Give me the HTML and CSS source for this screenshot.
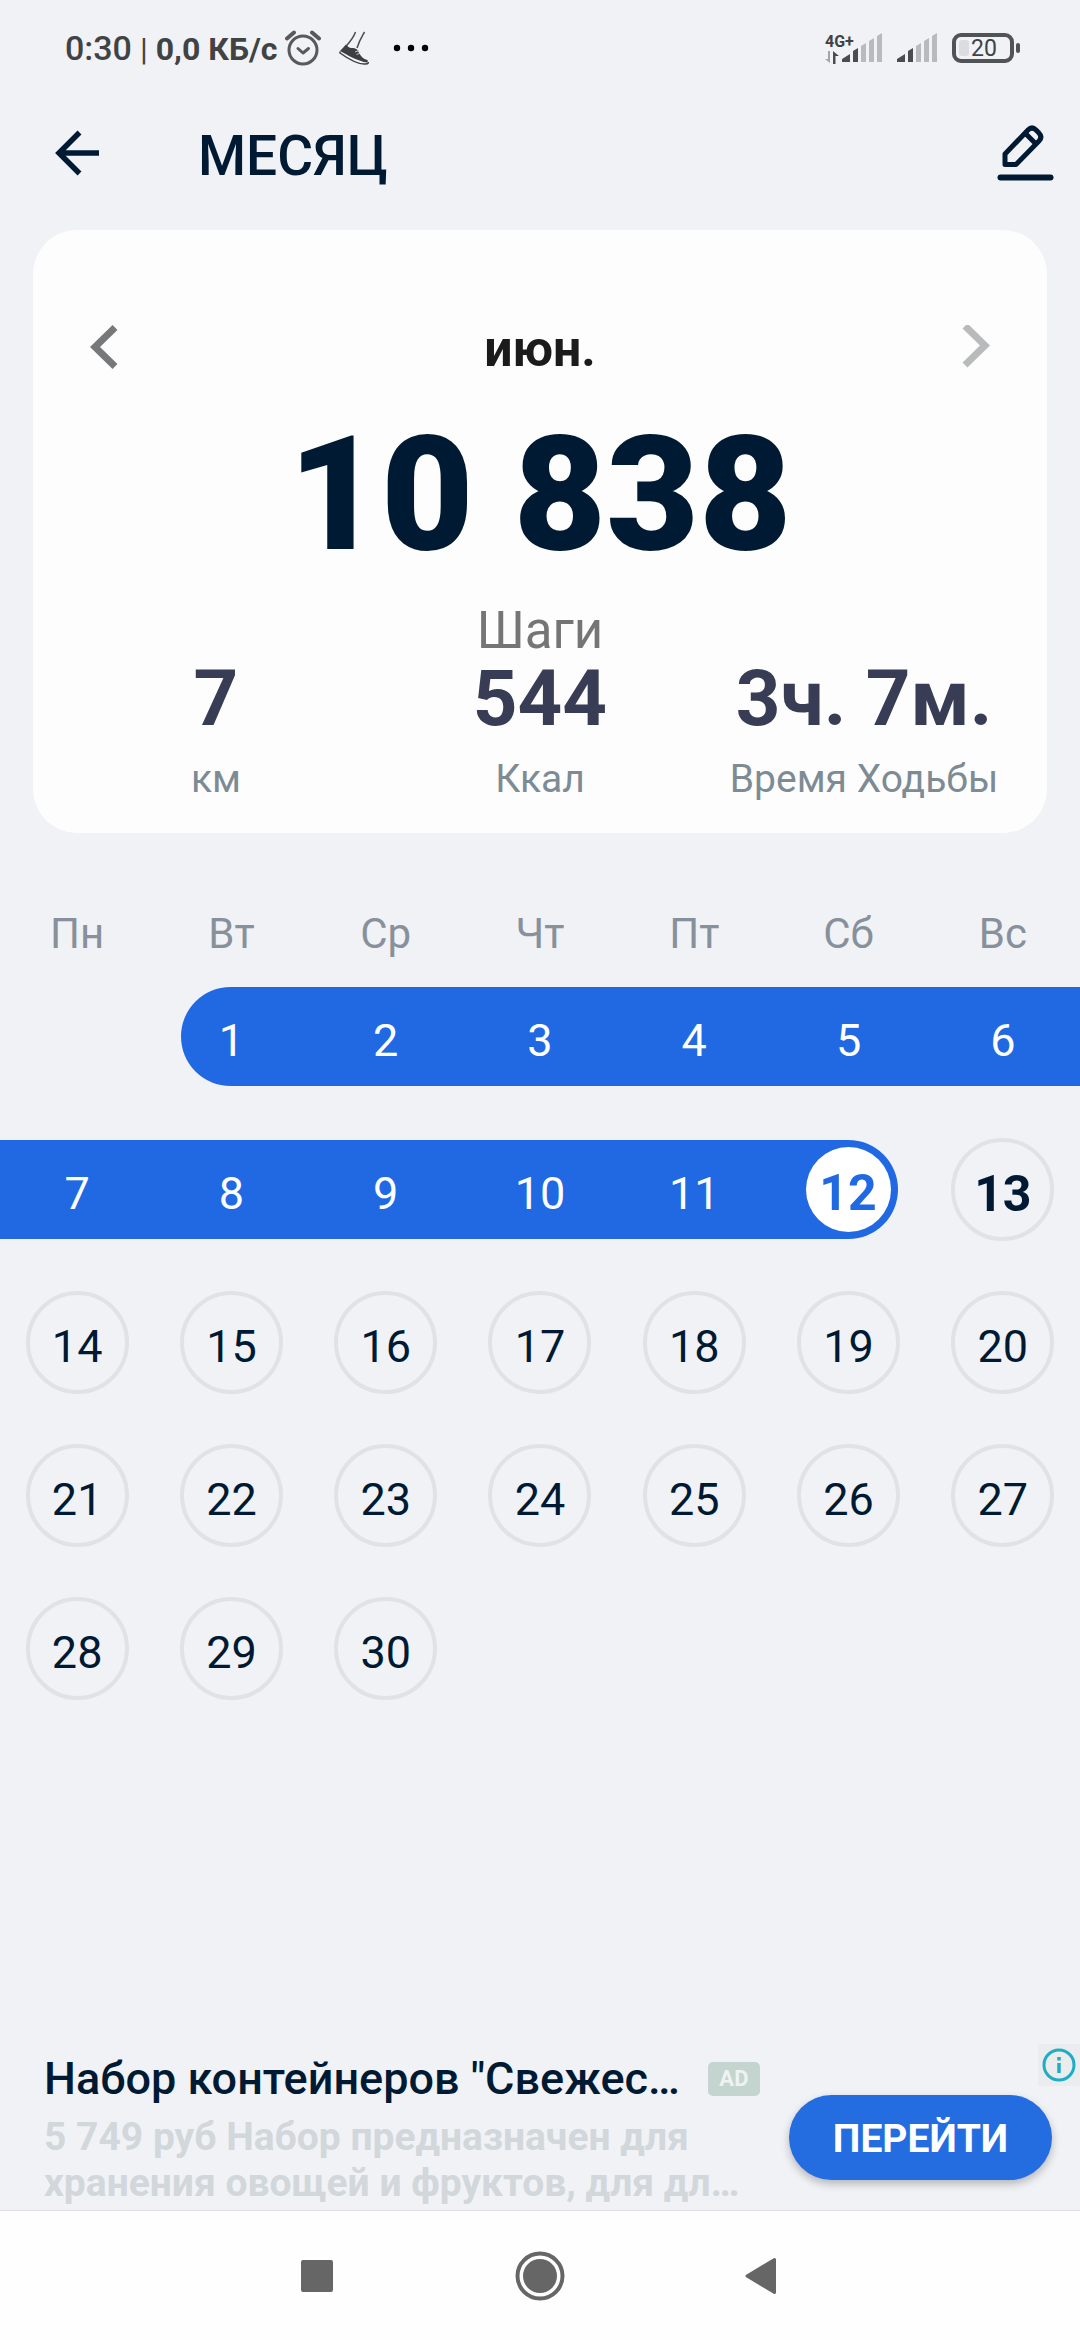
FILE: index.html
```html
<!DOCTYPE html>
<html lang="ru">
<head>
<meta charset="utf-8">
<meta name="viewport" content="width=device-width, initial-scale=1">
<title>Месяц</title>
<link rel="stylesheet" href="styles.css">
</head>
<body>
<div class="status">
  <div class="status-left">
    <p class="status-text"><span class="clock">0:30</span> <span class="bar">|</span> 0,0 КБ/с</p>
    <svg class="alarm" width="36" height="36" viewBox="0 0 36 36" fill="none" stroke="#58595b" stroke-width="3" stroke-linecap="round" stroke-linejoin="round">
      <circle cx="18" cy="20" r="14"/><path d="M13 18.500l5 4.500 5.500-4.500"/><path d="M2 8.500l7-6M34 8.500l-7-6" stroke-width="4"/>
    </svg>
    <svg class="shoe" width="30" height="34" viewBox="0 0 30 34">
      <path d="M16.500 1C14 8 9 13 5.500 17M25.500 1C22 7 20.500 9 18 17" fill="none" stroke="#4b4c4e" stroke-width="1.500"/>
      <path d="M7 13.500c2 2 3 3.500 5.500 3.500 2 0 4 0 5.500 1.500 2 3 3.500 6.500 6 8.500 2 1.500 4.500 1.500 5 3L28 31.500C20 30.500 8 24 1 20z" fill="#3d3e40"/>
      <path d="M1 20.500v1.500c7 5 17 11.500 25 11 2 0 3.500-1 3.500-2" fill="none" stroke="#3d3e40" stroke-width="1.500"/>
      <path d="M16 21l4-1.500M17.500 23.500l4-1.500" stroke="#c8c9cb" stroke-width="1"/>
    </svg>
    <svg class="more" width="36" height="8" viewBox="0 0 36 8"><circle cx="4" cy="4" r="3.200"/><circle cx="18" cy="4" r="3.200"/><circle cx="32" cy="4" r="3.200"/></svg>
  </div>
  <div class="status-right">
    <div class="network">
      <span class="net-type">4G+</span>
      <svg width="14" height="13" viewBox="0 0 14 13"><path d="M5 0v12L0 8h3V0z" fill="#a4a5a8"/><path d="M8 13V0l6 5h-3.500v8z" fill="#4b4c4e"/></svg>
    </div>
    <svg class="signal" width="40" height="30" viewBox="0 0 40 30"><path d="M0 29v-3l8-5v8zM11 29V18l5-3v14z" fill="#4b4c4e"/><path d="M19 29V13l5-3v19zM27 29V8l5-3v24zM35 29V3l5-3v29z" fill="#b9babd"/></svg>
    <svg class="signal" width="40" height="30" viewBox="0 0 40 30"><path d="M0 29v-3l8-5v8zM11 29V18l5-3v14z" fill="#4b4c4e"/><path d="M19 29V13l5-3v19zM27 29V8l5-3v24zM35 29V3l5-3v29z" fill="#b9babd"/></svg>
    <div class="battery"><span class="battery-body"><i class="charge"></i>20</span><i class="battery-tip"></i></div>
  </div>
</div>

<header class="appbar">
  <button class="icon-btn" type="button" aria-label="Назад">
    <svg width="44" height="46" viewBox="0 0 44 46" fill="none" stroke="#001a33" stroke-width="5.500"><path d="M44 23H5M24.500 2.500L4 23l20.500 20.500"/></svg>
  </button>
  <h1 class="title">МЕСЯЦ</h1>
  <button class="icon-btn" type="button" aria-label="Изменить">
    <svg width="57" height="56" viewBox="0 0 57 56" fill="none" stroke="#001a33" stroke-linecap="round" stroke-linejoin="round">
      <path d="M8 39.500V29L31 5Q35 1 39 5l2.500 2.500Q46 12 42 16L19 39.500z" stroke-width="5"/><path d="M29 9l9 9" stroke-width="5"/><path d="M3.500 52.500h50" stroke-width="6"/>
    </svg>
  </button>
</header>

<main>
  <section class="card">
    <div class="month">
      <button class="icon-btn" type="button" aria-label="Предыдущий месяц"><svg width="28" height="44" viewBox="0 0 28 44" fill="none" stroke="#76787a" stroke-width="7"><path d="M25 2.500L5 22l20 19.500"/></svg></button>
      <h2 class="month-name">июн.</h2>
      <button class="icon-btn" type="button" aria-label="Следующий месяц"><svg width="28" height="44" viewBox="0 0 28 44" fill="none" stroke="#b9babb" stroke-width="7"><path d="M3 1L23 20.500 3 40"/></svg></button>
    </div>
    <p class="steps">10 838</p>
    <p class="steps-label">Шаги</p>
    <div class="stats">
      <div><p class="value">7</p><p class="label">км</p></div>
      <div><p class="value">544</p><p class="label">Ккал</p></div>
      <div><p class="value">3ч. 7м.</p><p class="label">Время Ходьбы</p></div>
    </div>
  </section>

  <table class="calendar">
    <thead><tr><th>Пн</th><th>Вт</th><th>Ср</th><th>Чт</th><th>Пт</th><th>Сб</th><th>Вс</th></tr></thead>
    <tbody>
      <tr><td></td><td><button class="day range first"><span>1</span></button></td><td><button class="day range">2</button></td><td><button class="day range">3</button></td><td><button class="day range">4</button></td><td><button class="day range">5</button></td><td><button class="day range">6</button></td></tr>
      <tr><td><button class="day range">7</button></td><td><button class="day range">8</button></td><td><button class="day range">9</button></td><td><button class="day range">10</button></td><td><button class="day range">11</button></td><td><button class="day range last"><span>12</span></button></td><td><button class="day ring today">13</button></td></tr>
      <tr><td><button class="day ring">14</button></td><td><button class="day ring">15</button></td><td><button class="day ring">16</button></td><td><button class="day ring">17</button></td><td><button class="day ring">18</button></td><td><button class="day ring">19</button></td><td><button class="day ring">20</button></td></tr>
      <tr><td><button class="day ring">21</button></td><td><button class="day ring">22</button></td><td><button class="day ring">23</button></td><td><button class="day ring">24</button></td><td><button class="day ring">25</button></td><td><button class="day ring">26</button></td><td><button class="day ring">27</button></td></tr>
      <tr><td><button class="day ring">28</button></td><td><button class="day ring">29</button></td><td><button class="day ring">30</button></td><td></td><td></td><td></td><td></td></tr>
    </tbody>
  </table>
</main>

<aside class="ad">
  <div class="ad-copy">
    <div class="ad-head"><p class="ad-title">Набор контейнеров "Свежес…</p><span class="ad-badge">AD</span></div>
    <p class="ad-text">5 749 руб Набор предназначен для<br>хранения овощей и фруктов, для дл…</p>
  </div>
  <button class="ad-go" type="button">ПЕРЕЙТИ</button>
  <button class="ad-info" type="button" aria-label="О рекламе">
    <svg width="34" height="34" viewBox="0 0 34 34" fill="none" stroke="#1eaec4" stroke-width="3"><circle cx="17" cy="17" r="15"/><path d="M17 15v10M17 9v3.500" stroke-width="3.500"/></svg>
  </button>
</aside>

<nav class="sysnav">
  <button class="icon-btn" type="button" aria-label="Недавние"><svg width="50" height="50" viewBox="0 0 50 50"><rect x="9" y="9" width="32" height="32" rx="2" fill="#666"/></svg></button>
  <button class="icon-btn" type="button" aria-label="Домой"><svg width="50" height="50" viewBox="0 0 50 50"><circle cx="25" cy="25" r="22.500" fill="none" stroke="#666" stroke-width="4"/><circle cx="25" cy="25" r="17" fill="#666"/></svg></button>
  <button class="icon-btn" type="button" aria-label="Назад"><svg width="50" height="50" viewBox="0 0 50 50"><path d="M36.500 8.500v33L9 25z" fill="#666" stroke="#666" stroke-width="3" stroke-linejoin="round"/></svg></button>
</nav>
</body>
</html>
```
FILE: styles.css
```css
* { box-sizing: border-box; }

body {
  margin: 0;
  min-height: 100vh;
  display: flex;
  flex-direction: column;
  background: #f0f2f6;
  color: #001a33;
  font-family: Roboto, "Noto Sans", sans-serif;
}

h1, h2, p { margin: 0; }

button {
  border: 0;
  padding: 0;
  background: none;
  color: inherit;
  font: inherit;
}

svg { display: block; }

.icon-btn { display: flex; }

main { flex: 1; }

/* status bar */
.status {
  height: 96px;
  padding: 0 60px 0 65px;
  display: flex;
  align-items: center;
  justify-content: space-between;
  color: #414244;
}

.status-left, .status-right { display: flex; align-items: center; }

.status-text { font-size: 32px; line-height: 40px; font-weight: 700; }
.clock { font-size: 34px; font-weight: 500; }
.bar { font-weight: 400; }
.alarm { margin-left: 8px; }
.shoe { margin-left: 18px; }
.more { margin-left: 24px; }

/* the network type label runs on above the first signal bars */
.network { width: 17px; }
.net-type { display: block; font-size: 16px; line-height: 18px; font-weight: 700; white-space: nowrap; }
.signal { margin-right: 15px; }

.battery { display: flex; align-items: center; gap: 2px; }
.battery-body {
  width: 62px;
  height: 30px;
  display: flex;
  align-items: center;
  gap: 2px;
  padding-left: 3px;
  border: 4px solid #525356;
  border-radius: 9px;
  font-size: 23px;
}
.charge { width: 10px; height: 16px; border-radius: 3px; background: #dcdde0; }
.battery-tip { width: 4px; height: 10px; border-radius: 2px; background: #525356; }

/* title row */
.appbar {
  height: 114px;
  padding: 0 26px 0 55px;
  display: flex;
  align-items: center;
}
.title {
  flex: 1;
  padding: 6px 0 0 99px;
  font-size: 55px;
  line-height: 64px;
  font-weight: 500;
}

/* summary card */
.card {
  margin: 20px 33px 0;
  padding: 87px 21px 30px;
  border-radius: 44px;
  background: #fdfdfd;
  text-align: center;
}
.month {
  height: 60px;
  padding: 0 36px;
  display: flex;
  align-items: center;
  justify-content: space-between;
}
.month-name { padding-top: 4px; font-size: 50px; line-height: 60px; font-weight: 700; color: #1b1b1b; }
.steps { margin-top: 38px; font-size: 160px; line-height: 160px; font-weight: 900; }
.steps-label { margin-top: 30px; font-size: 51px; line-height: 52px; color: #757575; }
.stats { display: grid; grid-template-columns: repeat(3, 1fr); }
.value { font-size: 78px; line-height: 84px; font-weight: 700; color: #383c54; }
.label { margin-top: 14px; font-size: 39px; line-height: 48px; color: #7d8b95; }

/* calendar */
.calendar {
  width: 100%;
  margin-top: 75px;
  table-layout: fixed;
  border-collapse: collapse;
}
.calendar th {
  height: 52px;
  padding: 0;
  font-size: 42px;
  line-height: 52px;
  font-weight: 400;
  color: #88909b;
}
.calendar td { height: 153px; padding: 0; }

.day {
  display: flex;
  align-items: center;
  justify-content: center;
  margin: 0 auto;
  padding-top: 8px;
  font-size: 45px;
  line-height: 56px;
}
.ring { width: 103px; height: 103px; border: 4px solid #e0e2e5; border-radius: 50%; }
.today { font-size: 50px; font-weight: 700; }
.range { width: 100%; height: 99px; background: #2069e3; color: #fff; }
.first {
  width: calc(50% + 50px);
  margin-right: 0;
  justify-content: flex-start;
  border-radius: 50px 0 0 50px;
}
.first span { width: 100px; }
.last {
  width: calc(50% + 49px);
  margin-left: 0;
  padding: 0 7px 0 0;
  justify-content: flex-end;
  border-radius: 0 50px 50px 0;
}
.last span {
  width: 85px;
  height: 85px;
  padding-top: 18px;
  border-radius: 50%;
  background: #fff;
  color: #2069e3;
  font-size: 50px;
  font-weight: 700;
}

/* ad banner */
.ad {
  position: relative;
  display: flex;
  align-items: flex-start;
  justify-content: space-between;
  padding: 7px 28px 4px 44px;
}
.ad-head { display: flex; align-items: center; gap: 28px; }
.ad-title { font-size: 45px; line-height: 56px; font-weight: 500; }
.ad-badge {
  width: 52px;
  border-radius: 5px;
  background: #c4d4ce;
  color: #eef3f2;
  font-size: 22px;
  line-height: 34px;
  font-weight: 700;
  text-align: center;
}
.ad-text { margin-top: 7px; font-size: 39px; line-height: 46px; font-weight: 700; color: #d2d7db; }
.ad-go {
  width: 263px;
  height: 85px;
  margin-top: 44px;
  border-radius: 44px;
  background: #246de0;
  box-shadow: 0 4px 8px rgba(0, 0, 0, 0.25);
  color: #fff;
  font-size: 39px;
  line-height: 48px;
  font-weight: 700;
  padding-top: 3px;
}
.ad-info {
  position: absolute;
  top: 0;
  right: 0;
  padding: 4px;
  background: #ebeced;
}

/* system navigation */
.sysnav {
  height: 130px;
  border-top: 1px solid #e0e1e3;
  background: #fefefe;
  display: flex;
  align-items: center;
  justify-content: center;
  gap: 173px;
}
```
